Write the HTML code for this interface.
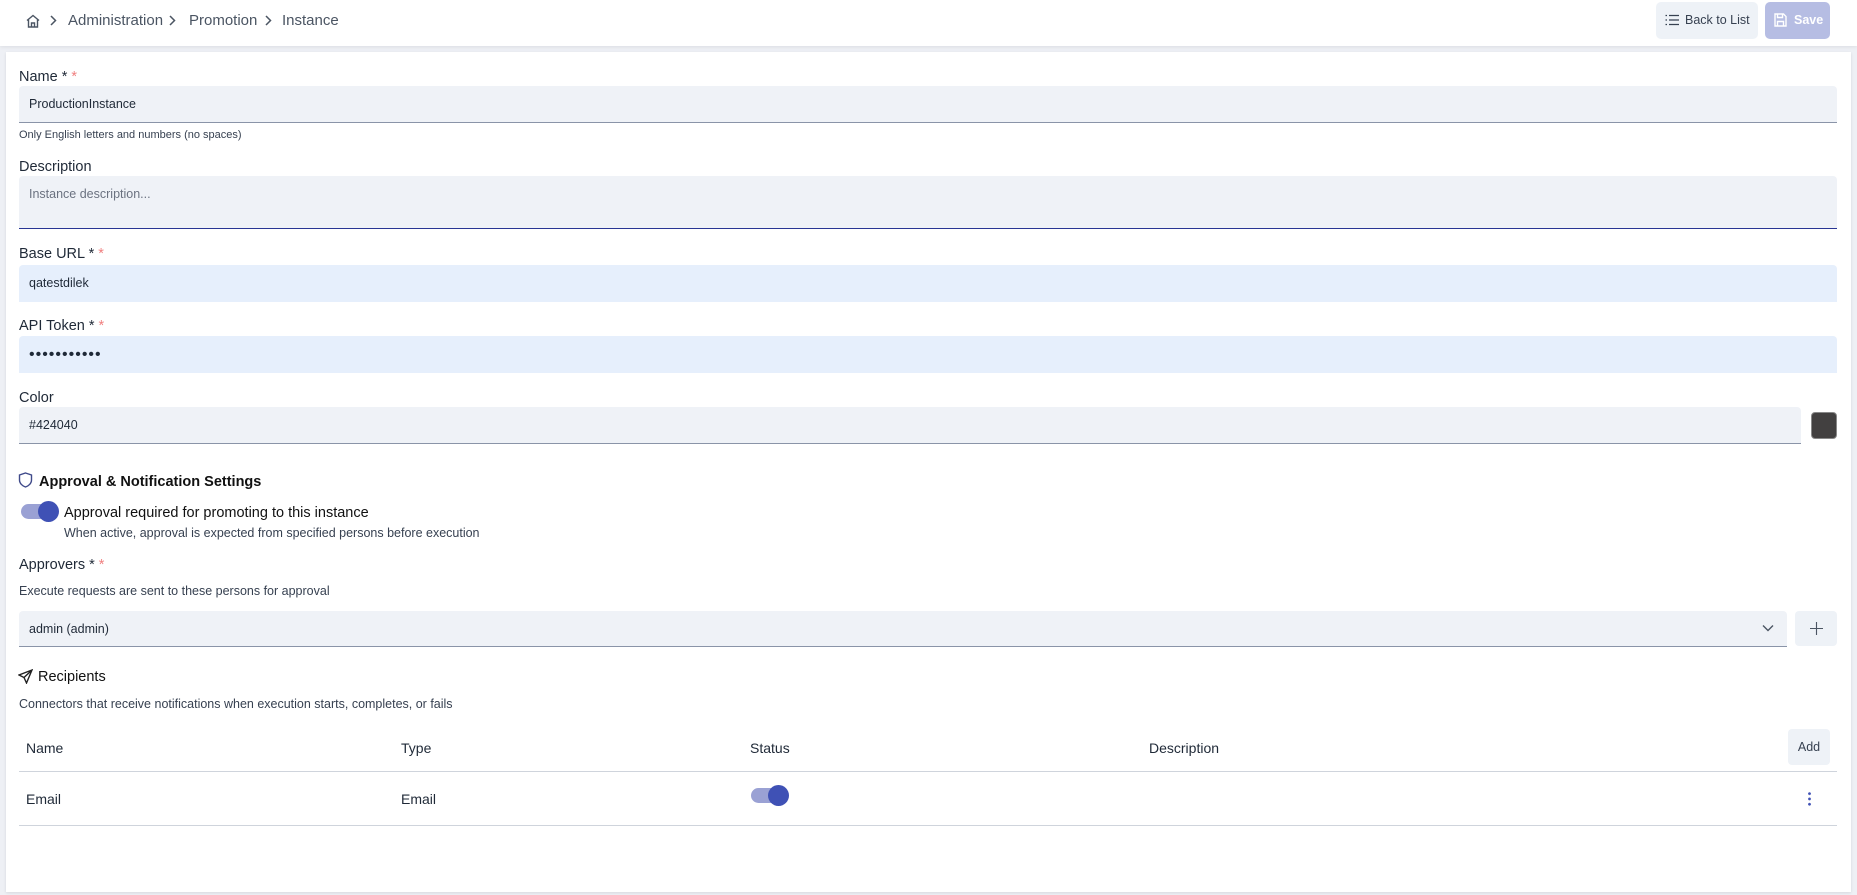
<!DOCTYPE html>
<html><head><meta charset="utf-8"><style>
*{box-sizing:border-box;margin:0;padding:0}
body{width:1857px;height:895px;background:#eef0f5;font-family:"Liberation Sans",Arial,sans-serif;color:#1f2937;position:relative;overflow:hidden}
.a{position:absolute}
.top{left:0;top:0;width:1857px;height:46px;background:#fff;box-shadow:0 1px 4px rgba(0,0,0,.08)}
.bc{top:12px;font-size:15px;color:#4b5563}
.card{left:6px;top:52px;width:1845px;height:840px;background:#fff;box-shadow:0 1px 3px rgba(0,0,0,.1)}
.lbl{left:19px;font-size:14.5px;color:#1f2937}
.lbl .r{color:#f08080}
.inp{left:19px;width:1818px;background:#eff2f7;border-bottom:1px solid #8a94a8;border-radius:4px 4px 0 0;font-size:12.5px;padding-left:10px;color:#1f2937}
.blue{background:#e6effc;border-bottom:none}
.help{left:19px;font-size:12.5px;color:#374151}
.th{top:740px;font-size:14px;color:#1f2937}
.td{top:791px;font-size:14px;color:#1f2937}
.tog{width:40px;height:21px}
.tog .t{position:absolute;left:2px;top:3px;width:36px;height:15px;border-radius:8px;background:#9aa1d4}
.tog .k{position:absolute;right:0;top:0;width:21px;height:21px;border-radius:50%;background:#3f51b5}
</style></head><body>
<div class="a top"></div>
<svg class="a" style="left:25px;top:13px" width="16" height="16" viewBox="0 0 16 16" fill="none" stroke="#4b5563" stroke-width="1.4"><path d="M2 7.5 8 2.5l6 5M3.5 6.5V14h9V6.5M6.5 14V10h3v4"/></svg>
<svg class="a" style="left:50px;top:15px" width="7" height="11" viewBox="0 0 7 11" fill="none" stroke="#4b5563" stroke-width="1.5"><path d="M1 1l4.5 4.5L1 10"/></svg>
<div class="a bc" style="left:68px">Administration</div>
<svg class="a" style="left:169px;top:15px" width="7" height="11" viewBox="0 0 7 11" fill="none" stroke="#4b5563" stroke-width="1.5"><path d="M1 1l4.5 4.5L1 10"/></svg>
<div class="a bc" style="left:189px">Promotion</div>
<svg class="a" style="left:265px;top:15px" width="7" height="11" viewBox="0 0 7 11" fill="none" stroke="#4b5563" stroke-width="1.5"><path d="M1 1l4.5 4.5L1 10"/></svg>
<div class="a bc" style="left:282px">Instance</div>
<div class="a" style="left:1656px;top:2px;width:102px;height:37px;background:#eef2f7;border-radius:5px;font-size:12.5px;color:#374151;line-height:37px;padding-left:29px">Back to List</div>
<svg class="a" style="left:1665px;top:14px" width="14" height="12" viewBox="0 0 14 12" stroke="#374151" stroke-width="1.3"><path d="M4 1.5h10M4 6h10M4 10.5h10M0.5 1.5h1.5M0.5 6h1.5M0.5 10.5h1.5"/></svg>
<div class="a" style="left:1765px;top:2px;width:65px;height:37px;background:#b6bde3;border-radius:5px;font-size:12.5px;color:#fff;font-weight:bold;line-height:37px;padding-left:29px">Save</div>
<svg class="a" style="left:1774px;top:13px" width="13" height="14" viewBox="0 0 13 14" fill="none" stroke="#fff" stroke-width="1.4"><path d="M1 1h8.5L12 3.5V13H1z M3.5 1v3.5h5V1 M3.5 13V8.5h6V13"/></svg>

<div class="a card"></div>
<div class="a lbl" style="top:69px">Name * <span class="r">*</span></div>
<div class="a inp" style="top:86px;height:37px;line-height:37px">ProductionInstance</div>
<div class="a help" style="top:129px;font-size:11px">Only English letters and numbers (no spaces)</div>
<div class="a lbl" style="top:159px">Description</div>
<div class="a inp" style="top:176px;height:53px;padding-top:11px;color:#6b7280;border-bottom:1.5px solid #283593">Instance description...</div>
<div class="a lbl" style="top:246px">Base URL * <span class="r">*</span></div>
<div class="a inp blue" style="top:265px;height:37px;line-height:37px">qatestdilek</div>
<div class="a lbl" style="top:318px">API Token * <span class="r">*</span></div>
<div class="a inp blue" style="top:336px;height:37px;line-height:37px;font-size:16px;letter-spacing:1px">•••••••••••</div>
<div class="a lbl" style="top:390px">Color</div>
<div class="a inp" style="top:407px;height:37px;line-height:37px;width:1782px">#424040</div>
<div class="a" style="left:1811px;top:412px;width:26px;height:27px;background:#424040;border-radius:4px;border:1px solid #888"></div>

<svg class="a" style="left:18px;top:472px" width="15" height="16" viewBox="0 0 15 16" fill="none" stroke="#3f4a8a" stroke-width="1.4"><path d="M7.5 1 13.5 3v5c0 3.5-3 6-6 7-3-1-6-3.5-6-7V3z"/></svg>
<div class="a" style="left:39px;top:474px;font-size:14.5px;font-weight:bold;color:#111">Approval &amp; Notification Settings</div>
<div class="a tog" style="left:19px;top:501px"><div class="t"></div><div class="k"></div></div>
<div class="a" style="left:64px;top:505px;font-size:14.5px;color:#111">Approval required for promoting to this instance</div>
<div class="a help" style="left:64px;top:526px">When active, approval is expected from specified persons before execution</div>
<div class="a lbl" style="top:557px">Approvers * <span class="r">*</span></div>
<div class="a help" style="top:584px">Execute requests are sent to these persons for approval</div>
<div class="a inp" style="top:611px;height:36px;line-height:36px;width:1768px">admin (admin)</div>
<svg class="a" style="left:1762px;top:624px" width="12" height="8" viewBox="0 0 12 8" fill="none" stroke="#4b5563" stroke-width="1.4"><path d="M1 1.5l5 5 5-5"/></svg>
<div class="a" style="left:1795px;top:611px;width:42px;height:35px;background:#eef2f7;border-radius:4px"></div>
<svg class="a" style="left:1810px;top:622px" width="13" height="13" viewBox="0 0 14 14" stroke="#4b5563" stroke-width="1.2"><path d="M7 0v14M0 7h14"/></svg>

<svg class="a" style="left:18px;top:669px" width="15" height="15" viewBox="0 0 15 15" fill="none" stroke="#222" stroke-width="1.4"><path d="M14 1 1 6l5 2.5L8.5 14zM14 1 6 8.5"/></svg>
<div class="a" style="left:38px;top:669px;font-size:14.5px;color:#111">Recipients</div>
<div class="a help" style="top:697px">Connectors that receive notifications when execution starts, completes, or fails</div>
<div class="a th" style="left:26px">Name</div>
<div class="a th" style="left:401px">Type</div>
<div class="a th" style="left:750px">Status</div>
<div class="a th" style="left:1149px">Description</div>
<div class="a" style="left:1788px;top:729px;width:42px;height:36px;background:#eef2f7;border-radius:4px;font-size:12.5px;line-height:36px;text-align:center;color:#374151">Add</div>
<div class="a" style="left:19px;top:771px;width:1818px;height:1px;background:#cfd4dc"></div>
<div class="a td" style="left:26px">Email</div>
<div class="a td" style="left:401px">Email</div>
<div class="a tog" style="left:749px;top:785px"><div class="t"></div><div class="k"></div></div>
<div class="a" style="left:1808px;top:791px;width:3px;height:16px;background:radial-gradient(circle,#3f51b5 1.2px,transparent 1.6px) 0 0/3px 5.3px"></div>
<div class="a" style="left:19px;top:825px;width:1818px;height:1px;background:#cfd4dc"></div>
</body></html>
